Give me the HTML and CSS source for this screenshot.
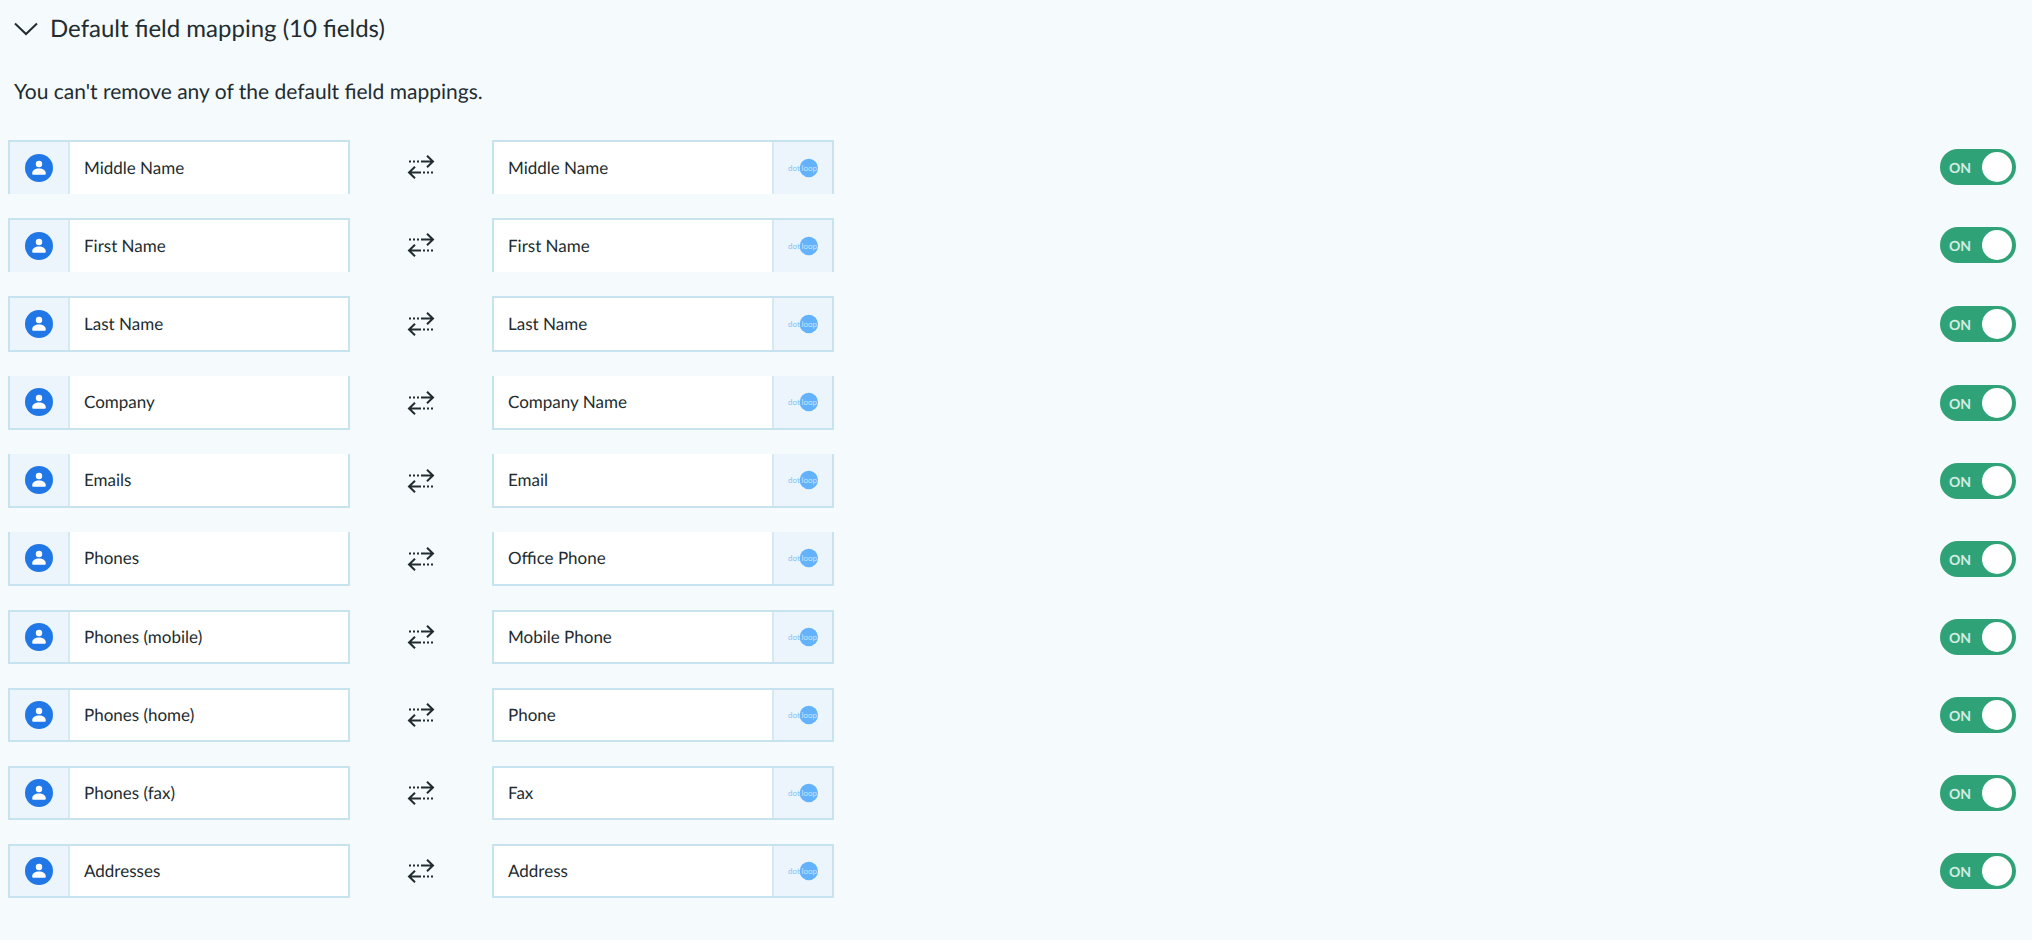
FILE: index.html
```html
<!DOCTYPE html>
<html lang="en">
<head>
  <meta charset="UTF-8">
  <meta name="viewport" content="width=device-width, initial-scale=1">
  <title>Default field mapping</title>
  <link rel="stylesheet" href="styles.css">
</head>
<body>

  <svg class="sprite" aria-hidden="true">
    <symbol id="icon-person" viewBox="0 0 28 28">
      <circle cx="14" cy="14" r="14" fill="#2277e6"/>
      <circle cx="14" cy="10" r="3.2" fill="#fff"/>
      <path d="M7.2 19.4c0-3.2 3.1-4.8 6.8-4.8s6.8 1.6 6.8 4.8c0 .9-.5 1.4-1.4 1.4H8.6c-.9 0-1.4-.5-1.4-1.4z" fill="#fff"/>
    </symbol>
    <symbol id="icon-sync" viewBox="0 0 28 24">
      <g fill="none" stroke="#222c30" stroke-width="2">
        <path d="M14 6.5h12M20 .7l6 5.8-6 5.8"/>
        <path d="M2 6.5h12" stroke-dasharray="2 2"/>
        <path d="M2 17.5h12M8 11.7l-6 5.8 6 5.8"/>
        <path d="M16 17.5h10" stroke-dasharray="2 2"/>
      </g>
    </symbol>
    <symbol id="icon-dotloop" viewBox="0 0 32 20">
      <circle cx="21.8" cy="10" r="9.2" fill="#63b2fb"/>
      <text x="1" y="12.5" class="logo-dot">dot</text>
      <text x="14.5" y="12.5" class="logo-loop">loop</text>
    </symbol>
  </svg>

  <main class="mapping">
    <h2 class="mapping-title">
      <button type="button" class="mapping-toggle" id="mappingToggle" aria-expanded="true" aria-controls="mappingBody">
        <svg class="chevron" viewBox="0 0 24 14" aria-hidden="true">
          <path d="M1 1.5l11 10.5L23 1.5" fill="none" stroke="#222c30" stroke-width="2"/>
        </svg>
        Default field mapping (10 fields)
      </button>
    </h2>

    <div id="mappingBody">
      <p class="mapping-note">You can't remove any of the default field mappings.</p>
      <div class="mapping-rows" id="mappingRows"></div>
    </div>
  </main>

  <script>
    const mappings = [
      { from: 'Middle Name', to: 'Middle Name', edge: 'open-bottom' },
      { from: 'First Name', to: 'First Name', edge: 'open-bottom' },
      { from: 'Last Name', to: 'Last Name', edge: 'tall' },
      { from: 'Company', to: 'Company Name', edge: 'open-top' },
      { from: 'Emails', to: 'Email', edge: 'open-top' },
      { from: 'Phones', to: 'Office Phone', edge: 'open-top' },
      { from: 'Phones (mobile)', to: 'Mobile Phone', edge: '' },
      { from: 'Phones (home)', to: 'Phone', edge: '' },
      { from: 'Phones (fax)', to: 'Fax', edge: '' },
      { from: 'Addresses', to: 'Address', edge: '' }
    ];

    const rows = document.getElementById('mappingRows');

    mappings.forEach((m, i) => {
      const row = document.createElement('div');
      row.className = `row ${m.edge}`;
      row.innerHTML = `
        <div class="field">
          <span class="badge badge-left"><svg class="person"><use href="#icon-person"/></svg></span>
          <input type="text" class="field-input" id="from${i}" aria-label="Contact field" value="${m.from}" readonly>
        </div>
        <svg class="sync" aria-hidden="true"><use href="#icon-sync"/></svg>
        <div class="field">
          <input type="text" class="field-input" id="to${i}" aria-label="Dotloop field" value="${m.to}" readonly>
          <span class="badge badge-right"><svg class="dotloop"><use href="#icon-dotloop"/></svg></span>
        </div>
        <label class="switch" for="on${i}">
          <input type="checkbox" class="switch-input" id="on${i}" aria-label="Sync ${m.from}" checked>
          <span class="switch-text">ON</span>
          <span class="switch-knob"></span>
        </label>
      `;
      rows.appendChild(row);
    });

    const toggle = document.getElementById('mappingToggle');
    toggle.addEventListener('click', () => {
      const body = document.getElementById('mappingBody');
      body.hidden = !body.hidden;
      toggle.setAttribute('aria-expanded', String(!body.hidden));
    });
  </script>

</body>
</html>
```

FILE: styles.css
```css
* {
  box-sizing: border-box;
}

body {
  margin: 0;
  font-family: Lato, sans-serif;
  color: #222c30;
  background-color: #f5fafd;
  text-rendering: geometricPrecision;
}

.sprite {
  display: none;
}

.mapping {
  padding: 13px 16px 24px 8px;
}

.mapping-title {
  margin: 0;
  padding-left: 6px;
}

.mapping-toggle {
  display: flex;
  align-items: center;
  gap: 12px;
  padding: 0;
  border: 0;
  background: none;
  color: inherit;
  font: 24px/32px Lato, sans-serif;
  text-rendering: inherit;
  cursor: pointer;
}

.chevron {
  width: 24px;
  height: 14px;
}

.mapping-note {
  margin: 32px 0 33px;
  padding-left: 6px;
  font-size: 21px;
  line-height: 30px;
}

.mapping-rows {
  display: flex;
  flex-direction: column;
  gap: 24px;
}

.row {
  display: flex;
  align-items: center;
}

.field {
  display: flex;
  width: 342px;
  height: 54px;
  border: 2px solid #c7e3ef;
  background-color: #fff;
}

.open-bottom .field {
  border-bottom: 0;
}

.open-top .field {
  border-top: 0;
}

.tall .field {
  height: 56px;
}

.field-input {
  flex: 1;
  min-width: 0;
  padding: 0 14px 2px;
  border: 0;
  background: none;
  color: inherit;
  font: 17px Lato, sans-serif;
  text-rendering: inherit;
}

.badge {
  display: flex;
  align-items: center;
  justify-content: center;
  width: 60px;
  background-color: #ebf5fb;
}

.badge-left {
  border-right: 2px solid #d5e9f2;
}

.badge-right {
  border-left: 2px solid #d5e9f2;
}

.person {
  width: 28px;
  height: 28px;
}

.dotloop {
  width: 32px;
  height: 20px;
}

.logo-dot,
.logo-loop {
  font: 8px Lato, sans-serif;
  fill: #86c3f8;
}

.logo-loop {
  fill: #c3e2fe;
}

.sync {
  width: 28px;
  height: 24px;
  margin: 0 57px;
}

.switch {
  display: flex;
  align-items: center;
  justify-content: space-between;
  width: 76px;
  height: 36px;
  margin-left: auto;
  padding: 0 4px 0 9px;
  border-radius: 18px;
  background-color: #2fa377;
  cursor: pointer;
}

.switch-input {
  position: absolute;
  opacity: 0;
}

.switch-text {
  color: #d3ece2;
  font-size: 14px;
  font-weight: bold;
}

.switch-knob {
  width: 30px;
  height: 30px;
  border-radius: 50%;
  background-color: #fff;
}

.switch:not(:has(:checked)) {
  background-color: #9aa8ae;
}
```
